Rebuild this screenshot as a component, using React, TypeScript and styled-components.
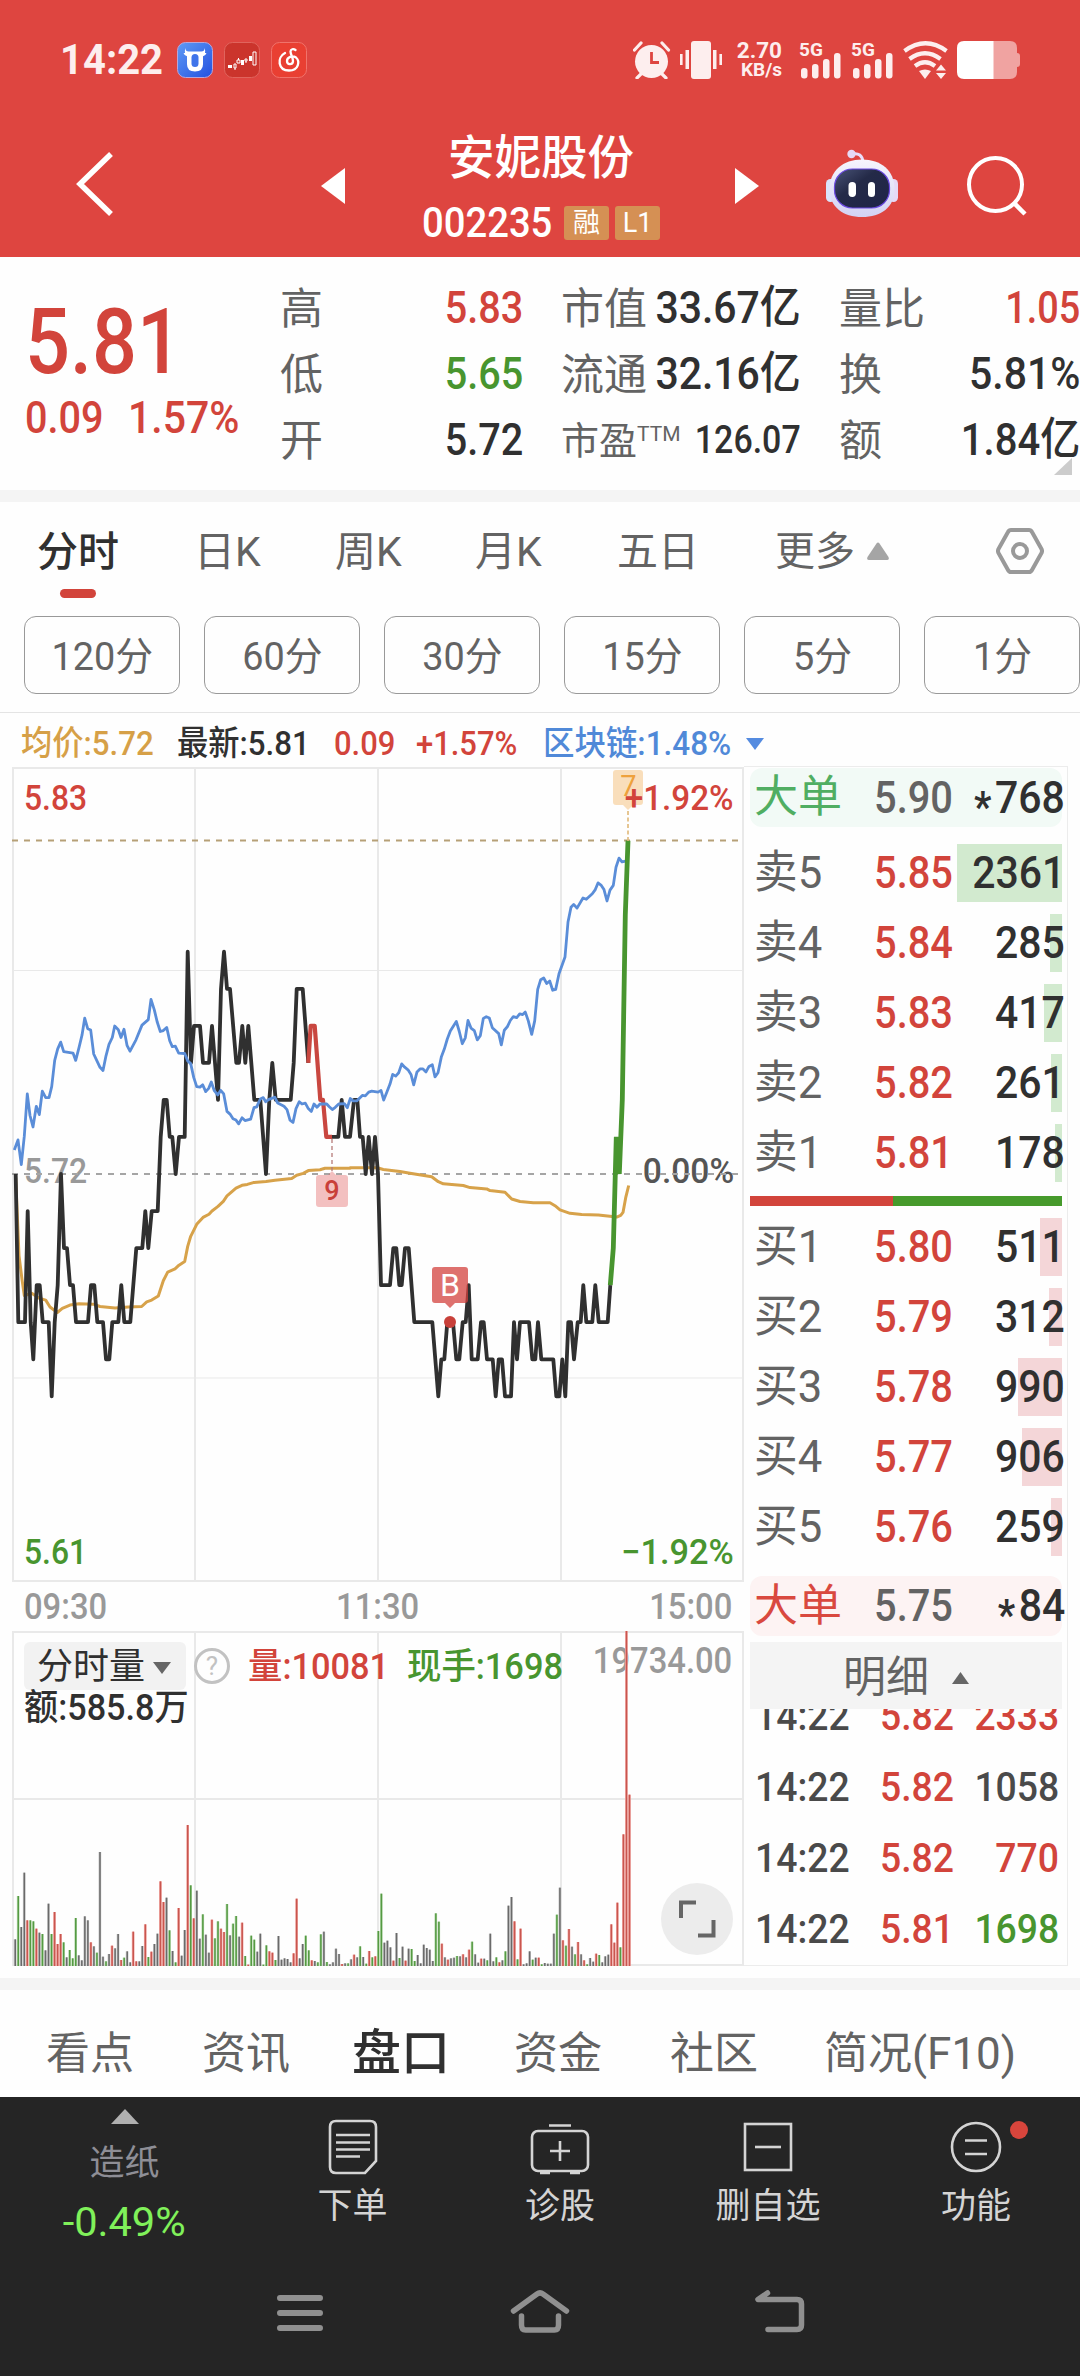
import React from "react";
import styled, { createGlobalStyle } from "styled-components";

const RED = "#d2443b";
const GREEN = "#48952f";
const INK = "#303030";
const GREY = "#636363";
const GRID = "#e9e9e9";

const Global = createGlobalStyle`
  * { box-sizing: border-box; }
  body { margin: 0; background: #fff; }
`;

const Screen = styled.div`
  width: 1080px;
  height: 2376px;
  overflow: hidden;
  display: flex;
  flex-direction: column;
  background: #fefefe;
  font-family: Roboto, "Noto Sans CJK SC", sans-serif;
  color: ${INK};
`;

/* Narrow numeral text: the face is condensed horizontally from one edge. */
const Text = styled.span<{ $s: number; $c?: string; $w?: number; $k?: number; $o?: string }>`
  display: inline-block;
  flex: none;
  white-space: nowrap;
  line-height: 1.2;
  font-size: ${(p) => p.$s}px;
  color: ${(p) => p.$c ?? INK};
  font-weight: ${(p) => p.$w ?? 500};
  transform: scaleX(${(p) => p.$k ?? 0.91});
  transform-origin: ${(p) => p.$o ?? "left"} center;
`;

const Label = styled.span<{ $s: number; $c?: string; $w?: number }>`
  flex: none;
  white-space: nowrap;
  line-height: 1.2;
  font-size: ${(p) => p.$s}px;
  color: ${(p) => p.$c ?? GREY};
  font-weight: ${(p) => p.$w ?? 400};
`;

/* ---------- header ---------- */
const Header = styled.header`
  height: 257px;
  flex: none;
  background: #de4540;
`;
const StatusBar = styled.div`
  height: 112px;
  padding: 7px 60px 0 60px;
  display: flex;
  align-items: center;
  justify-content: space-between;
`;
const StatusGroup = styled.div<{ $gap: number }>`
  display: flex;
  align-items: center;
  gap: ${(p) => p.$gap}px;
`;
const Clock = styled.div`
  width: 106px;
`;
const Speed = styled.div`
  width: 46px;
  height: 40px;
  margin: 0 8px 0 5px;
  display: flex;
  flex-direction: column;
  align-items: flex-end;
  justify-content: space-between;
  color: #fdeeee;
  font: 700 22.5px/20px Roboto, sans-serif;
`;
const SpeedUnit = styled.span`
  font-size: 19px;
`;
const NavBar = styled.div`
  height: 145px;
  display: flex;
  align-items: center;
`;
const Slot = styled.div<{ $ml: number; $mt?: number }>`
  flex: none;
  display: flex;
  margin-left: ${(p) => p.$ml}px;
  margin-top: ${(p) => p.$mt ?? 0}px;
`;
const TitleBlock = styled.div`
  width: 238px;
  margin-left: 77px;
  height: 145px;
  padding-top: 15px;
  display: flex;
  flex-direction: column;
  align-items: center;
`;
const TitleLine = styled.div`
  height: 64px;
  display: flex;
  align-items: center;
`;
const CodeLine = styled(TitleLine)`
  width: 238px;
  gap: 6px;
`;
const CodeCell = styled.div`
  width: 136px;
`;
const Badge = styled.span`
  width: 45px;
  height: 34px;
  border-radius: 3px;
  background: #d59054;
  color: #fff;
  display: flex;
  align-items: center;
  justify-content: center;
  font-size: 27px;
  line-height: 1;
`;

/* ---------- quote ---------- */
const Quote = styled.section`
  height: 233px;
  flex: none;
  position: relative;
  display: grid;
  grid-template-columns: 280px 281px 278px 241px;
`;
const Main = styled.div`
  padding: 31px 0 0 25px;
`;
const BigPrice = styled.div`
  height: 110px;
  display: flex;
  align-items: center;
`;
const Changes = styled.div`
  height: 40px;
  margin-top: -7px;
  display: grid;
  grid-template-columns: 103px 120px;
  align-items: center;
`;
const Stats = styled.div<{ $r: number }>`
  padding: 18px ${(p) => p.$r}px 0 0;
  display: flex;
  flex-direction: column;
`;
const Stat = styled.div`
  height: 66px;
  display: flex;
  align-items: center;
  justify-content: space-between;

  & > :first-child {
    margin-top: 3px;
  }
  & > :last-child {
    margin-left: -40px;
  }
`;
const Ttm = styled.sup`
  font-size: 21px;
  line-height: 0;
  vertical-align: 13px;
`;
const Corner = styled.i`
  position: absolute;
  right: 8px;
  bottom: 15px;
  border-left: 18px solid transparent;
  border-bottom: 17px solid #ccc;
`;
const Band = styled.div`
  height: 12px;
  flex: none;
  background: #f4f4f4;
`;

/* ---------- period tabs ---------- */
const Tabs = styled.nav`
  height: 100px;
  flex: none;
  display: grid;
  grid-template-columns: 37px 157px 141px 140px 142px 158px 221px auto;
`;
const Tab = styled.div`
  height: 100px;
  padding-top: 26px;
  display: flex;
  gap: 12px;
  align-items: flex-start;
`;
const ActiveTab = styled.div`
  width: 82px;
  height: 96px;
  padding-top: 26px;
  display: flex;
  flex-direction: column;
  justify-content: space-between;
  align-items: center;
`;
const Underline = styled.i`
  width: 36px;
  height: 9px;
  border-radius: 5px;
  background: ${RED};
`;
const UpMark = styled.svg`
  margin-top: 14px;
`;
const Periods = styled.div`
  height: 111px;
  flex: none;
  padding: 14px 0 0 24px;
  display: flex;
  gap: 24px;
  border-bottom: 1px solid #e4e4e4;
`;
const Period = styled.button`
  flex: none;
  width: 156px;
  height: 78px;
  padding: 4px 0 0;
  border: 1px solid #999;
  border-radius: 12px;
  background: none;
  display: flex;
  align-items: center;
  justify-content: center;
  font-family: inherit;
`;

/* ---------- chart ---------- */
const Board = styled.section`
  height: 1265px;
  flex: none;
  display: grid;
  grid-template-columns: 744px 324px;
`;
const ChartCol = styled.div``;
const Info = styled.div`
  height: 54px;
  padding: 7px 0 0 21px;
  display: grid;
  grid-template-columns: 156px 157px 82px 127px 203px auto;
  align-items: center;
`;
const PriceChart = styled.div`
  position: relative;
  height: 815px;
`;
const Drawing = styled.svg`
  position: absolute;
  left: 0;
  top: 0;
`;
const ChartLabel = styled.div<{ $y: number }>`
  position: absolute;
  left: 24px;
  right: 10px;
  top: ${(p) => p.$y}px;
  display: flex;
  justify-content: space-between;
`;
const Times = styled.div`
  height: 49px;
  padding: 2px 12px 0 24px;
  display: flex;
  align-items: center;
  justify-content: space-between;
`;
const VolumeChart = styled.div`
  position: relative;
  height: 336px;
`;
const VolumeHead = styled.div`
  position: absolute;
  left: 24px;
  top: 11px;
  display: grid;
  grid-template-columns: 170px 54px 159px 170px;
  align-items: center;
`;
const VolumeText = styled(Text)`
  margin-top: 3px;
`;
const Picker = styled.div`
  width: 162px;
  height: 48px;
  padding: 4px 15px 0 13px;
  border-radius: 6px;
  background: #f2f2f2;
  display: flex;
  align-items: center;
  justify-content: space-between;
`;
const Help = styled.div`
  width: 36px;
  height: 36px;
  border: 3px solid #c2c2c2;
  border-radius: 50%;
  display: flex;
  align-items: center;
  justify-content: center;
  color: #c2c2c2;
  font-size: 26px;
  line-height: 1;
`;
const Amount = styled.div`
  position: absolute;
  left: 24px;
  top: 56px;
`;
const MaxVolume = styled.div`
  position: absolute;
  right: 12px;
  top: 9px;
`;
const Expand = styled.div`
  position: absolute;
  left: 661px;
  top: 252px;
  width: 72px;
  height: 72px;
  border-radius: 50%;
  background: #ececec;
`;

/* ---------- order book ---------- */
const Book = styled.aside`
  height: 1200px;
  margin-top: 53px;
  border: 1px solid #ececec;
  border-left: 0;
  padding: 1px 5px 0 6px;
  display: flex;
  flex-direction: column;
`;
const Row = styled.div`
  position: relative;
  flex: none;
  width: 312px;
  height: 58px;
  margin-bottom: 12px;
  display: grid;
  grid-template-columns: 120px 94px 97px;
  align-items: center;
  padding-left: 4px;
`;
const BigRow = styled(Row)<{ $bg: string; $mb: number }>`
  height: 59px;
  margin-bottom: ${(p) => p.$mb}px;
  border-radius: 12px;
  background: ${(p) => p.$bg};
`;
const LowerBig = styled(BigRow)`
  margin-top: 8px;
  height: 60px;
`;
const Star = styled.span`
  font-size: 42px;
  font-weight: 700;
  line-height: 0;
  vertical-align: -8px;
  margin-right: 4px;
`;
const Depth = styled.i<{ $bg: string; $n: number }>`
  position: absolute;
  right: 0;
  top: 0;
  bottom: 0;
  width: ${(p) => p.$n}px;
  background: ${(p) => p.$bg};
`;
const Cell = styled.div<{ $end?: boolean }>`
  position: relative;
  display: flex;
  justify-content: ${(p) => (p.$end ? "flex-end" : "flex-start")};
`;
const Ratio = styled.div`
  flex: none;
  height: 10px;
  width: 312px;
  margin: 2px 0 12px;
  background: linear-gradient(to right, ${RED} 143.5px, #469a2c 143.5px);
`;
const DetailHead = styled.div`
  flex: none;
  width: 312px;
  height: 67px;
  padding-top: 5px;
  background: #f4f4f4;
  display: flex;
  align-items: center;
  justify-content: center;
  gap: 23px;
`;
const Trades = styled.div`
  flex: 1;
  overflow: hidden;
  width: 312px;
  display: flex;
  flex-direction: column;
  justify-content: flex-end;
`;
const Trade = styled.div`
  flex: none;
  height: 71px;
  padding: 0 3px 0 5px;
  display: grid;
  grid-template-columns: 125px 80px 99px;
  align-items: center;
`;

/* ---------- lower navigation ---------- */
const Sections = styled.nav`
  flex: none;
  height: 107px;
  padding: 21px 0 0 46px;
  display: grid;
  grid-template-columns: 156px 150px 162px 156px 154px auto;
  align-items: center;
`;
const Dock = styled.footer`
  flex: none;
  height: 279px;
  background: #252525;
`;
const Actions = styled.div`
  height: 153px;
  display: grid;
  grid-template-columns: 249px 207px 208px 208px 208px;
`;
const Action = styled.div`
  position: relative;
  padding-top: 20px;
  display: flex;
  flex-direction: column;
  align-items: center;
  gap: 9px;
`;
const Sector = styled.div`
  padding: 12px 0 0;
  display: flex;
  flex-direction: column;
  align-items: center;
`;
const SectorName = styled.div`
  margin-top: 19px;
  height: 56px;
`;
const Dot = styled.i`
  position: absolute;
  left: 138px;
  top: 24px;
  width: 18px;
  height: 18px;
  border-radius: 50%;
  background: #d8453c;
`;
const SystemNav = styled.div`
  height: 126px;
  padding: 0 274px;
  display: flex;
  align-items: center;
  justify-content: space-between;
`;

/* ---------- data ---------- */
type Pt = [number, number];
const STEP = 37.05;
const level = (pts: Pt[]) => pts.map(([x, k]) => `${(x / 3).toFixed(1)},${(407 + k * STEP).toFixed(1)}`).join(" ");
const early = (pts: Pt[]) => pts.map(([x, y]) => `${(x / 3).toFixed(1)},${(y / 2.178 - 67).toFixed(1)}`).join(" ");
const late = (pts: Pt[]) => pts.map(([x, y]) => `${(x / 3 + 350).toFixed(1)},${(y / 2.376 - 7).toFixed(1)}`).join(" ");

const morning: Pt[] = [
  [47,0],[55,4],[75,4],[83,1],[92,4],[100,5],[110,3],[119,3],[128,4],[146,4],[155,6],[164,4],[173,3],[183,0],[192,2],[201,2],[210,3],[219,3],[228,4],[264,4],[273,3],[283,3],[292,4],[309,4],[318,5],[328,5],[337,4],[355,4],[364,3],[373,4],[391,4],[409,2],[427,2],[436,1],[445,2],[455,1],[473,1],[482,-1],[491,-2],[500,-2],[509,-1],[517,-1],[527,0],[537,-1],[554,-1],[563,-6],[573,-3],[582,-4],[600,-4],[609,-3],[627,-3],[636,-4],[654,-2],[663,-5],[672,-6],[681,-5],[690,-5],[709,-3],[717,-3],[727,-4],[736,-3],[745,-4],[763,-2],[781,-2],[798,0],[808,-2],[817,-3],[827,-2],[872,-2],[881,-3],[890,-5],[908,-5],[925,-3],
];
const falling: Pt[] = [[925,-3],[932,-4],[944,-4],[961,-2],[969,-2],[979,-1],[996,-1]];
const afternoon: Pt[] = [
  [996,-1],[1015,-1],[1025,-2],[1035,-1],[1050,-1],[1062,-2],[1072,-2],[1080,-1],[1088,-1],[1097,0],[1106,-1],[1116,0],[1125,-1],[1134,0],[1143,3],[1170,3],[1180,2],[1189,2],[1198,3],[1205,3],[1215,2],[1226,2],[1243,4],[1297,4],[1315,6],[1324,5],[1333,5],[1342,4],[1359,4],[1369,5],[1378,5],[1388,4],[1397,4],[1406,3],[1415,5],[1433,5],[1443,4],[1451,4],[1461,5],[1478,5],[1487,6],[1496,5],[1506,5],[1515,6],[1533,6],[1542,4],[1551,5],[1560,4],[1587,4],[1597,5],[1606,5],[1614,4],[1624,5],[1660,5],[1669,6],[1678,6],[1687,5],[1696,6],[1705,4],[1713,4],[1722,5],[1733,4],[1742,4],[1750,3],[1759,4],[1777,4],[1786,3],[1796,4],[1823,4],[1831,3],
];
const surge: Pt[] = [[1831,3],[1840,2],[1849,-1],[1858,0],[1867,-2],[1876,-7],[1884,-9]];
const sectorA: Pt[] = [
  [43,980],[54,958],[64,1012],[73,950],[82,858],[90,905],[99,930],[109,885],[118,903],[127,852],[137,866],[147,866],[155,842],[164,785],[173,760],[182,745],[191,766],[219,769],[227,785],[237,757],[246,730],[254,693],[263,716],[272,719],[281,771],[290,785],[300,800],[309,807],[318,775],[327,750],[337,735],[344,710],[355,718],[363,735],[372,717],[381,752],[390,765],[408,740],[426,708],[445,696],[453,652],[463,675],[472,702],[481,722],[490,720],[500,713],[509,742],[517,755],[526,754],[536,769],[554,770],[563,786],[572,792],[581,822],[590,842],[600,843],[608,838],[617,853],[626,846],[634,832],[643,851],[653,860],[662,850],[671,858],[681,896],[690,902],[699,912],[708,915],[716,923],[726,910],[735,916],[752,913],[762,888],[770,886],[781,869],[790,866],[797,875],[807,870],[824,865],[833,878],[852,885],[861,892],[870,915],[879,920],[888,890],[898,875],[906,880],[916,878],[925,890],[934,896],[942,880],[951,887],[960,880],[980,880],[988,886],[997,892],[1006,887],[1016,880],[1033,879],[1042,888],[1051,868],
];
const sectorB: Pt[] = [
  [9,810],[20,810],[37,797],[46,798],[56,789],[65,787],[84,789],[93,785],[101,808],[110,790],[120,770],[128,747],[137,751],[146,743],[155,722],[164,730],[174,736],[183,747],[191,772],[201,741],[210,734],[219,734],[228,741],[237,728],[247,724],[255,753],[264,743],[274,706],[283,687],[292,663],[301,644],[319,621],[328,645],[337,674],[346,660],[354,619],[363,637],[373,643],[382,665],[391,655],[400,614],[409,610],[418,613],[427,636],[446,650],[454,677],[463,642],[472,634],[481,619],[490,610],[500,612],[509,603],[518,605],[526,599],[535,620],[545,652],[554,620],[563,545],[572,522],[581,518],[590,531],[599,525],[608,547],[617,545],[627,508],[645,468],[654,385],[663,350],[671,343],[681,352],[699,328],[709,331],[727,318],[736,308],[744,292],[754,298],[762,308],[771,335],[780,309],[790,298],[798,255],[807,233],[816,242],[834,239],
];
const avgA: Pt[] = [
  [47,1040],[57,1210],[66,1262],[73,1297],[95,1292],[118,1303],[137,1307],[150,1322],[172,1334],[187,1325],[210,1318],[237,1315],[280,1316],[300,1321],[345,1324],[385,1322],[425,1321],[440,1311],[455,1307],[475,1298],[490,1265],[503,1246],[525,1239],[537,1231],[554,1223],[563,1190],[572,1168],[590,1142],[609,1127],[627,1120],[636,1113],[654,1103],[670,1092],[681,1080],[708,1063],[726,1057],[742,1055],[760,1051],[798,1049],[825,1046],[875,1042],[890,1035],[910,1031],[925,1025],[960,1023],[975,1020],[1050,1020],
];
const avgB: Pt[] = [
  [0,969],[82,969],[100,973],[150,978],[180,982],[245,990],[265,1002],[280,1007],[340,1011],[360,1016],[410,1019],[420,1023],[465,1027],[485,1043],[510,1049],[550,1052],[600,1052],[615,1059],[630,1069],[660,1077],[695,1080],[745,1081],[800,1086],[812,1082],[819,1075],[827,1040],[836,1011],
];

/* One entry per minute: direction letter (n flat, u up, d down) and height in thirds of a pixel. */
const volumes = (
  "n80 d210 n117 n280 u137 d137 d134 u112 n100 d96 n47 n187 d96 u162 u66 u96 d71 n26 d48 d23 d144 n32 n17 n149 n137 u71 n59 d40 n342 n28 d14 n36 u61 n53 n96 u18 d25 n44 n11 u103 u14 n14 n60 u125 d27 u43 n66 n97 u254 u192 n205 d107 n45 d11 u174 n31 n108 u423 d242 u143 " +
  "n226 n82 d155 n94 n40 u139 d83 d134 u112 u102 d186 n92 d127 d150 n88 u130 d30 u4 d91 d79 n43 n97 d4 d62 u44 u40 d18 n90 n19 n23 n21 n11 u38 u202 n23 n66 d91 d47 u17 n15 d11 d95 n103 d12 n5 n11 n52 n36 u6 n8 d8 n20 u34 n26 d59 n27 d7 u45 d26 u29 " +
  "d105 d217 n70 n76 n56 u16 n99 d24 n58 u16 n52 d51 d15 n33 n8 n64 n54 n49 n15 d158 d133 u67 n26 u19 n23 n25 d30 n29 u35 n26 u49 d73 n35 n10 u22 n22 d17 n97 n14 d26 u11 n17 d44 n181 n207 u134 d20 u112 n5 n8 n44 d19 n25 u25 d5 n9 n7 n7 n97 d154 " +
  "n235 u77 d61 u111 n58 d35 u72 n35 u17 d5 n24 n13 u37 d33 n11 n29 n34 u125 u70 u190 d56 u395 u1005 u514"
).split(" ");
const volColor: Record<string, string> = { n: "#6a6a6a", u: "#c8564f", d: "#559a43" };
const volSoft: Record<string, string> = { n: "#c9c9c9", u: "#f3aaa6", d: "#bddcb4" };

const sells: [string, string, string, number][] = [
  ["卖5", "5.85", "2361", 105],
  ["卖4", "5.84", "285", 12],
  ["卖3", "5.83", "417", 18],
  ["卖2", "5.82", "261", 11],
  ["卖1", "5.81", "178", 7],
];
const buys: [string, string, string, number][] = [
  ["买1", "5.80", "511", 22],
  ["买2", "5.79", "312", 13],
  ["买3", "5.78", "990", 44],
  ["买4", "5.77", "906", 40],
  ["买5", "5.76", "259", 11],
];
const trades: [string, string, string, string][] = [
  ["14:22", "5.82", "2333", RED],
  ["14:22", "5.82", "1058", "#4a4a4a"],
  ["14:22", "5.82", "770", RED],
  ["14:22", "5.81", "1698", GREEN],
];

/* ---------- small drawings ---------- */
const Signal = () => (
  <svg width="43" height="38" viewBox="0 0 43 38" fill="#fdeeee" overflow="visible">
    <text x="0" y="14.500" fontSize="19" fontWeight="700" fontFamily="Roboto, sans-serif">5G</text>
    <rect x="2" y="27" width="6.500" height="10.500" rx="3" />
    <rect x="13" y="23" width="6.500" height="14.500" rx="3" />
    <rect x="24" y="18" width="6.500" height="19.500" rx="3" />
    <rect x="35" y="12" width="6.500" height="25.500" rx="3" />
  </svg>
);

const AppIcons = () => (
  <>
    <svg width="36" height="36" viewBox="0 0 36 36">
      <defs>
        <linearGradient id="ox" x1="0" y1="0" x2="1" y2="1">
          <stop offset="0" stopColor="#5f9bf5" />
          <stop offset="1" stopColor="#2350e0" />
        </linearGradient>
      </defs>
      <rect x=".5" y=".5" width="35" height="35" rx="8" fill="url(#ox)" stroke="#b9a5d8" />
      <path d="M8.500 6q0 4 4 3.500h11q4 .5 4-3.500 1 3 .5 5h1.500q-1 3-3.500 3.200v8q0 7.300-8 7.300t-8-7.300v-8Q7.500 14 6.500 11H8q-.5-2 .5-5z" fill="#fff" />
      <rect x="14.500" y="12" width="7" height="13" rx="3.500" fill="#3f74ea" />
    </svg>
    <svg width="36" height="36" viewBox="0 0 36 36">
      <rect x=".5" y=".5" width="35" height="35" rx="8" fill="#cb342c" stroke="#e0645d" />
      <g fill="#fff">
        <rect x="4" y="23" width="4" height="3" />
        <rect x="17" y="18" width="3" height="5" />
        <rect x="25" y="14" width="3" height="5" />
      </g>
      <g fill="none" stroke="#fff">
        <path d="M10 22h2v4h-2zM13 18h3v3h-3zM21 17h2v2h-2zM29 10h3v13h-3zM14.500 16v2M22 19v2M11 26v2" />
      </g>
    </svg>
    <svg width="36" height="36" viewBox="0 0 36 36">
      <rect x=".5" y=".5" width="35" height="35" rx="8" fill="#e93f32" stroke="#f0736b" />
      <path d="M24.500 8c-2-1.500-5-1-5 1.500 0 3 3 7 2.500 10-.5 3.500-6 3.500-6-.5 0-4 5.500-6 9-3.500 4 3.500 3 13-7 13-11 0-12.500-13-4-17.500" fill="none" stroke="#fff" strokeWidth="2.300" strokeLinecap="round" />
    </svg>
  </>
);

const StatusIcons = () => (
  <>
    <svg width="38" height="38" viewBox="0 0 38 38">
      <circle cx="18.500" cy="20.500" r="16.500" fill="#fdeeee" />
      <path d="M1.500 9L8 2M35.500 9L29 2M4 37l5-5M33 37l-5-5" stroke="#fdeeee" strokeWidth="3.200" strokeLinecap="round" />
      <path d="M18.500 11v10.500H26" fill="none" stroke="#de4540" strokeWidth="2.800" />
    </svg>
    <svg width="42" height="38" viewBox="0 0 42 38" fill="#fdeeee">
      <rect x="11" y="0" width="20" height="38" rx="3" />
      <rect x="0" y="13" width="2.600" height="11" /><rect x="5.500" y="9" width="3.500" height="19" />
      <rect x="33" y="9" width="3.500" height="19" /><rect x="39.400" y="13" width="2.600" height="11" />
    </svg>
  </>
);

const Wifi = () => (
  <svg width="45" height="38" viewBox="0 0 45 38" fill="none" stroke="#fdeeee" strokeWidth="4.200">
    <path d="M1.500 10q21-15.500 42 0M6.500 18q15.500-11.500 31 0M12 25q10-7.500 20 0" />
    <path d="M16 30q6-3 12 0l-6 8zM33 29.500l5-6 5 6zM33 32l5 6 5-6z" fill="#fdeeee" stroke="none" />
  </svg>
);

const Robot = () => (
  <svg width="74" height="70" viewBox="0 0 74 70">
    <defs>
      <linearGradient id="shell" x1="0" y1="0" x2="0" y2="1">
        <stop offset="0" stopColor="#f6f4fd" /><stop offset="1" stopColor="#d3d2f3" />
      </linearGradient>
      <linearGradient id="face" x1="0" y1="0" x2="1" y2="1">
        <stop offset="0" stopColor="#4a5478" /><stop offset=".4" stopColor="#242a48" /><stop offset="1" stopColor="#1f2448" />
      </linearGradient>
    </defs>
    <path d="M27 6q10-2 11 8" fill="none" stroke="#e9defa" strokeWidth="3" />
    <circle cx="26.500" cy="6" r="4.200" fill="#e6daf6" />
    <rect x="1" y="31" width="9" height="23" rx="4.500" fill="#d9e4fb" />
    <rect x="64" y="31" width="9" height="23" rx="4.500" fill="#e6d9f6" />
    <path d="M37 11.500c19 0 32.500 11 32.500 29.500S56 69 37 69 4.500 59 4.500 41 18 11.500 37 11.500z" fill="url(#shell)" />
    <rect x="9.500" y="21" width="55" height="39" rx="18" fill="url(#face)" stroke="#6a49e0" strokeWidth="1.200" />
    <rect x="23.500" y="34" width="7.500" height="15" rx="3.700" fill="#fff" />
    <rect x="43" y="34" width="7" height="15" rx="3.500" fill="#fff" />
  </svg>
);

const BookRow = ({ row, bg }: { row: [string, string, string, number]; bg: string }) => (
  <Row>
    <Depth $bg={bg} $n={row[3]} />
    <Cell><Text $s={45} $c={GREY} $w={400} $k={0.97}>{row[0]}</Text></Cell>
    <Cell><Text $s={45} $c={RED} $k={0.885}>{row[1]}</Text></Cell>
    <Cell $end><Text $s={45} $o="right">{row[2]}</Text></Cell>
  </Row>
);

export default function App() {
  return (
    <Screen>
      <Global />
      <Header>
        <StatusBar>
          <StatusGroup $gap={11}>
            <Clock><Text $s={43} $c="#fdeeee" $w={700} $k={0.93}>14:22</Text></Clock>
            <AppIcons />
          </StatusGroup>
          <StatusGroup $gap={9}>
            <StatusIcons />
            <Speed><span>2.70</span><SpeedUnit>KB/s</SpeedUnit></Speed>
            <Signal />
            <Signal />
            <Wifi />
            <svg width="63" height="38" viewBox="0 0 63 38">
              <path d="M36 0h17q7 0 7 7v5q3 0 3 3v8q0 3-3 3v5q0 7-7 7H36z" fill="#f0a3a1" />
              <path d="M7 0h29.500v38H7q-7 0-7-7V7q0-7 7-7z" fill="#fff" />
            </svg>
          </StatusGroup>
        </StatusBar>
        <NavBar>
          <Slot $ml={76} $mt={-2}>
            <svg width="38" height="66" viewBox="0 0 38 66"><path d="M35 3L4 33l31 30" fill="none" stroke="#fff" strokeWidth="5.500" /></svg>
          </Slot>
          <Slot $ml={207} $mt={3}>
            <svg width="24" height="36"><path d="M24 0v36L0 18z" fill="#fff" /></svg>
          </Slot>
          <TitleBlock>
            <TitleLine><Label $s={46.5} $c="#fff" $w={500}>安妮股份</Label></TitleLine>
            <CodeLine>
              <CodeCell><Text $s={42} $c="#fff">002235</Text></CodeCell>
              <Badge>融</Badge>
              <Badge>L1</Badge>
            </CodeLine>
          </TitleBlock>
          <Slot $ml={75} $mt={3}>
            <svg width="24" height="36"><path d="M0 0v36l24-18z" fill="#fff" /></svg>
          </Slot>
          <Slot $ml={66} $mt={-4}><Robot /></Slot>
          <Slot $ml={67} $mt={3}>
            <svg width="62" height="62" viewBox="0 0 62 62" fill="none" stroke="#fff" strokeWidth="4">
              <circle cx="29.500" cy="29.500" r="26.500" />
              <path d="M48 48l11 11" strokeWidth="4.500" />
            </svg>
          </Slot>
        </NavBar>
      </Header>

      <Quote>
        <Main>
          <BigPrice><Text $s={91} $c={RED} $k={0.87}>5.81</Text></BigPrice>
          <Changes>
            <Text $s={45} $c={RED} $k={0.88}>0.09</Text>
            <Text $s={45} $c={RED}>1.57%</Text>
          </Changes>
        </Main>
        <Stats $r={38}>
          <Stat><Label $s={43}>高</Label><Text $s={45} $c={RED} $o="right" $k={0.88}>5.83</Text></Stat>
          <Stat><Label $s={43}>低</Label><Text $s={45} $c={GREEN} $o="right" $k={0.88}>5.65</Text></Stat>
          <Stat><Label $s={43}>开</Label><Text $s={45} $o="right" $k={0.88}>5.72</Text></Stat>
        </Stats>
        <Stats $r={38}>
          <Stat><Label $s={43}>市值</Label><Text $s={45} $o="right">33.67亿</Text></Stat>
          <Stat><Label $s={43}>流通</Label><Text $s={45} $o="right">32.16亿</Text></Stat>
          <Stat><Label $s={38}>市盈<Ttm>TTM</Ttm></Label><Text $s={39} $o="right" $k={0.87}>126.07</Text></Stat>
        </Stats>
        <Stats $r={0}>
          <Stat><Label $s={43}>量比</Label><Text $s={45} $c={RED} $o="right" $k={0.84}>1.05</Text></Stat>
          <Stat><Label $s={43}>换</Label><Text $s={45} $o="right">5.81%</Text></Stat>
          <Stat><Label $s={43}>额</Label><Text $s={45} $o="right" $k={0.89}>1.84亿</Text></Stat>
        </Stats>
        <Corner />
      </Quote>
      <Band />

      <Tabs>
        <span />
        <ActiveTab><Label $s={41} $c={INK} $w={500}>分时</Label><Underline /></ActiveTab>
        <Tab><Label $s={41}>日K</Label></Tab>
        <Tab><Label $s={41}>周K</Label></Tab>
        <Tab><Label $s={41}>月K</Label></Tab>
        <Tab><Label $s={41}>五日</Label></Tab>
        <Tab>
          <Label $s={40}>更多</Label>
          <UpMark width="22" height="18"><path d="M9.500 1.500q1.500-2 3 0L21.500 15q1 3-1.500 3H2q-2.500 0-1.500-3z" fill="#a5a5a5" /></UpMark>
        </Tab>
        <Tab>
          <svg width="48" height="46" viewBox="0 0 48 46" fill="none" stroke="#999" strokeWidth="4" strokeLinejoin="round">
            <path d="M15 2h18q2 0 3 2l9.500 17q1 2 0 4L36 42q-1 2-3 2H15q-2 0-3-2L2.500 25q-1-2 0-4L12 4q1-2 3-2z" />
            <circle cx="24" cy="23" r="7" />
          </svg>
        </Tab>
      </Tabs>
      <Periods>
        {["120分", "60分", "30分", "15分", "5分", "1分"].map((t) => (
          <Period key={t}><Text $s={39} $c={GREY} $w={400} $k={0.97} $o="center">{t}</Text></Period>
        ))}
      </Periods>

      <Board>
        <ChartCol>
          <Info>
            <Text $s={34} $c="#d6a047" $k={0.92}>均价:5.72</Text>
            <Text $s={34} $k={0.92}>最新:5.81</Text>
            <Text $s={34} $c={RED}>0.09</Text>
            <Text $s={34} $c={RED}>+1.57%</Text>
            <Text $s={34} $c="#5089d8" $k={0.925}>区块链:1.48%</Text>
            <svg width="18" height="12"><path d="M0 0h18L9 12z" fill="#548be0" /></svg>
          </Info>
          <PriceChart>
            <Drawing width="744" height="815" viewBox="0 0 744 815" fill="none">
              <g stroke={GRID} strokeWidth="2">
                <path d="M13 1v813M195 1v813M378 1v813M561 1v813M743 1v813M12 1h732M12 814h732" />
                <path d="M12 203.500h732M12 611h732" strokeWidth="1" />
              </g>
            </Drawing>
            <ChartLabel $y={384}>
              <Text $s={35} $c="#999">5.72</Text>
              <Text $s={35} $c="#555" $o="right" $k={0.96}>0.00%</Text>
            </ChartLabel>
            <Drawing width="744" height="815" viewBox="0 0 744 815" fill="none" strokeLinejoin="round">
              <path d="M12 73.500h732" stroke="#b6a077" strokeWidth="1.800" strokeDasharray="6 6" />
              <path d="M12 407h732" stroke="#a5a5a5" strokeWidth="1.800" strokeDasharray="6 6" />
              <polyline points={early(avgA) + " " + late(avgB)} stroke="#d7a24a" strokeWidth="3" />
              <polyline points={level(morning)} stroke={INK} strokeWidth="3.800" />
              <polyline points={level(afternoon)} stroke={INK} strokeWidth="3.800" />
              <polyline points={level(falling)} stroke="#c94740" strokeWidth="4.200" />
              <polyline points={early(sectorA) + " " + late(sectorB)} stroke="#5a8dd8" strokeWidth="2.800" />
              <polyline points={level(surge)} stroke={GREEN} strokeWidth="4.800" strokeLinejoin="miter" />
              <path d="M332 372v32" stroke="#b57a78" strokeWidth="1.300" strokeDasharray="4 3" />
              <path d="M319 408h9l4-4 4 4h9q3 0 3 3v26q0 3-3 3h-26q-3 0-3-3v-26q0-3 3-3z" fill="#e15b5b" fillOpacity=".38" />
              <text x="332" y="433" fontSize="27" fontWeight="500" textAnchor="middle" fill="#c9403a" fontFamily="Roboto, sans-serif">9</text>
              <circle cx="450" cy="555" r="6" fill="#c8403a" />
              <path d="M435 500h30q3 0 3 3v30q0 3-3 3h-10l-5 5-5-5h-10q-3 0-3-3v-30q0-3 3-3z" fill="#d23f3c" fillOpacity=".74" />
              <text x="450" y="529" fontSize="32" textAnchor="middle" fill="#fff" fontFamily="Roboto, sans-serif">B</text>
              <path d="M628 44v30" stroke="#e0b878" strokeWidth="1.600" strokeDasharray="4 2.500" />
              <path d="M616 3h24q3 0 3 3v29q0 3-3 3h-7l-5 5-5-5h-7q-3 0-3-3V6q0-3 3-3z" fill="#f0a23c" fillOpacity=".34" />
              <text x="628.500" y="29" fontSize="29" textAnchor="middle" fill="#eea13c" fontFamily="Roboto, sans-serif">7</text>
            </Drawing>
            <ChartLabel $y={11}>
              <Text $s={35} $c={RED}>5.83</Text>
              <Text $s={35} $c={RED} $o="right" $k={0.95}>+1.92%</Text>
            </ChartLabel>
            <ChartLabel $y={765}>
              <Text $s={35} $c={GREEN}>5.61</Text>
              <Text $s={35} $c={GREEN} $o="right" $k={0.98}>−1.92%</Text>
            </ChartLabel>
          </PriceChart>
          <Times>
            <Text $s={36} $c="#999">09:30</Text>
            <Text $s={36} $c="#999" $o="center">11:30</Text>
            <Text $s={36} $c="#999" $o="right">15:00</Text>
          </Times>
          <VolumeChart>
            <MaxVolume><Text $s={36} $c="#999" $o="right">19734.00</Text></MaxVolume>
            <Drawing width="744" height="336" viewBox="0 0 744 336">
              <path d="M13 0v335M195 0v335M378 0v335M561 0v335M743 0v335M12 1h732M12 168h732M12 334h732" stroke={GRID} strokeWidth="2" />
              {volumes.map((v, i) => {
                const h = Number(v.slice(1)) / 3;
                const x = 14.3 + i * 3.026;
                return (
                  <g key={i}>
                    <rect x={x - 0.5} y={335 - h} width="2.700" height={h} fill={volSoft[v[0]]} />
                    <rect x={x + 0.2} y={335 - h} width="1.500" height={h} fill={volColor[v[0]]} />
                  </g>
                );
              })}
            </Drawing>
            <VolumeHead>
              <Picker>
                <Label $s={36} $c={INK}>分时量</Label>
                <svg width="18" height="12"><path d="M0 0h18L9 12z" fill="#666" /></svg>
              </Picker>
              <Help>?</Help>
              <VolumeText $s={36} $c={RED} $k={0.955}>量:10081</VolumeText>
              <VolumeText $s={36} $c={GREEN} $k={0.955}>现手:1698</VolumeText>
            </VolumeHead>
            <Amount><Text $s={36} $k={0.95}>额:585.8万</Text></Amount>
            <Expand>
              <svg width="72" height="72" fill="none" stroke="#666" strokeWidth="4"><path d="M20 35V19.500h15M37 52.500h15.500V37" /></svg>
            </Expand>
          </VolumeChart>
        </ChartCol>

        <Book>
          <BigRow $bg="#f2faf6" $mb={17}>
            <Cell><Label $s={44} $c="#50ae62">大单</Label></Cell>
            <Cell><Text $s={45} $c={GREY} $k={0.885}>5.90</Text></Cell>
            <Cell $end><Text $s={45} $o="right"><Star>*</Star>768</Text></Cell>
          </BigRow>
          {sells.map((r) => <BookRow key={r[0]} row={r} bg="#d2eacf" />)}
          <Ratio />
          {buys.map((r) => <BookRow key={r[0]} row={r} bg="#f4d6d8" />)}
          <LowerBig $bg="#fdf3f3" $mb={6}>
            <Cell><Label $s={44} $c="#d9493f">大单</Label></Cell>
            <Cell><Text $s={45} $c={GREY} $k={0.885}>5.75</Text></Cell>
            <Cell $end><Text $s={45} $o="right"><Star>*</Star>84</Text></Cell>
          </LowerBig>
          <DetailHead>
            <Label $s={43}>明细</Label>
            <svg width="17" height="12"><path d="M0 12h17L8.500 0z" fill="#666" /></svg>
          </DetailHead>
          <Trades>
            {trades.map((t, i) => (
              <Trade key={i}>
                <Text $s={41} $c="#4a4a4a">{t[0]}</Text>
                <Text $s={41} $c={RED}>{t[1]}</Text>
                <Cell $end><Text $s={41} $c={t[3]} $o="right">{t[2]}</Text></Cell>
              </Trade>
            ))}
          </Trades>
        </Book>
      </Board>
      <Band />

      <Sections>
        <Label $s={44}>看点</Label>
        <Label $s={44}>资讯</Label>
        <Label $s={49} $c={INK} $w={500}>盘口</Label>
        <Label $s={44}>资金</Label>
        <Label $s={44}>社区</Label>
        <Label $s={44}>简况(F10)</Label>
      </Sections>

      <Dock>
        <Actions>
          <Sector>
            <svg width="28" height="15"><path d="M0 15h28L14 0z" fill="#b0b0b0" /></svg>
            <SectorName><Label $s={35} $c="#8e8e96">造纸</Label></SectorName>
            <Text $s={40} $c="#80f15a" $w={400} $o="center" $k={1.04}>-0.49%</Text>
          </Sector>
          <Action>
            <svg width="52" height="60" viewBox="0 0 52 60" fill="none" stroke="#d4d4d4" strokeWidth="2.600">
              <path d="M9 4h34q6 0 6 6v34L38 56H9q-6 0-6-6V10q0-6 6-6z" />
              <path d="M9 18h34M9 25.500h34M9 32.500h34M9 39.500h24" />
            </svg>
            <Label $s={35} $c="#d4d4d4">下单</Label>
          </Action>
          <Action>
            <svg width="60" height="60" viewBox="0 0 60 60" fill="none" stroke="#d4d4d4" strokeWidth="2.600">
              <rect x="2" y="14" width="56" height="40" rx="6" />
              <path d="M19 8.500h22M30 24v20M20 34h20M10 56h10M40 56h10" />
            </svg>
            <Label $s={35} $c="#d4d4d4">诊股</Label>
          </Action>
          <Action>
            <svg width="52" height="60" viewBox="0 0 52 60" fill="none" stroke="#d4d4d4" strokeWidth="2.600">
              <rect x="3" y="7" width="46" height="46" />
              <path d="M13 30h26" />
            </svg>
            <Label $s={35} $c="#d4d4d4">删自选</Label>
          </Action>
          <Action>
            <svg width="52" height="60" viewBox="0 0 52 60" fill="none" stroke="#d4d4d4" strokeWidth="2.600">
              <circle cx="26" cy="30" r="24" />
              <path d="M15 23.500h22M15 37h22" />
            </svg>
            <Label $s={35} $c="#d4d4d4">功能</Label>
            <Dot />
          </Action>
        </Actions>
        <SystemNav>
          <svg width="52" height="50" viewBox="0 0 52 50" stroke="#909090" strokeWidth="6" strokeLinecap="round">
            <path d="M6 10h40M6 25h40M6 40h40" />
          </svg>
          <svg width="60" height="50" viewBox="0 0 60 50" fill="none" stroke="#909090" strokeWidth="5.500" strokeLinecap="round" strokeLinejoin="round">
            <path d="M3.500 23L27 6q3-2.300 6 0l23.500 17M11.500 28v9q0 5 4 5h29q4 0 4-5v-9" />
          </svg>
          <svg width="52" height="50" viewBox="0 0 52 50" fill="none" stroke="#909090" strokeWidth="5.500" strokeLinecap="round" strokeLinejoin="round">
            <path d="M13.500 5L4 11.500h39q4.500 0 4.500 4.500v21q0 4.500-4.500 4.500H14" />
          </svg>
        </SystemNav>
      </Dock>
    </Screen>
  );
}
